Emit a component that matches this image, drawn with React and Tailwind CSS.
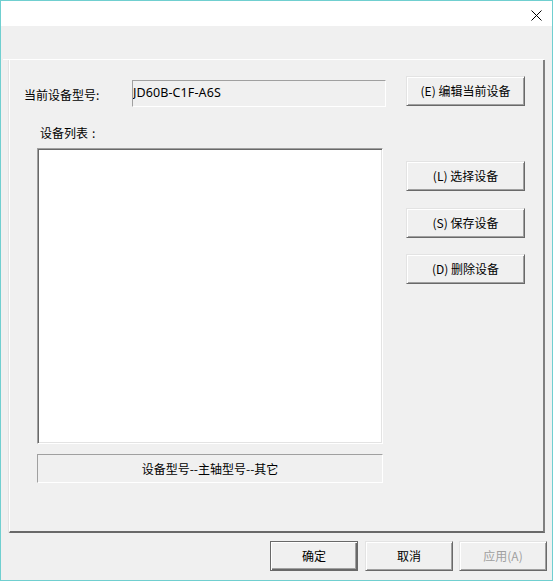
import React from "react";

function WinButton({ children, className = "", disabled = false, isDefault = false }) {
  const look = isDefault
    ? "border border-[#696969] shadow-[inset_1px_1px_0_#ffffff,inset_-1px_-1px_0_#696969,inset_-2px_-2px_0_#a0a0a0]"
    : "border border-t-[#e3e3e3] border-l-[#e3e3e3] border-r-[#696969] border-b-[#696969] shadow-[inset_1px_1px_0_#ffffff,inset_-1px_-1px_0_#a0a0a0]";
  return (
    <button
      className={`flex items-center justify-center bg-[#f0f0f0] text-[12px] leading-none ${look} ${
        disabled ? "text-[#a0a0a0]" : "text-black"
      } ${className}`}
    >
      {children}
    </button>
  );
}

function App() {
  return (
    <div className="w-[553px] h-[581px] border border-[#70cfd0] bg-[#f0f0f0] flex flex-col font-['Noto_Sans_CJK_SC',sans-serif] text-black overflow-hidden">
      {/* title bar */}
      <div className="h-[25px] bg-white flex items-start justify-end pr-[10px] pt-[9px] shrink-0">
        <svg width="11" height="11" viewBox="0 0 11 11">
          <path d="M0.5 0.5 L10.5 10.5 M10.5 0.5 L0.5 10.5" stroke="#000" strokeWidth="1" />
        </svg>
      </div>

      {/* tab page line */}
      <div className="mt-[33px] ml-[2px] w-[541px] h-px bg-white shrink-0" />

      {/* group panel */}
      <div className="ml-[8px] w-[536px] h-[473px] border-l border-l-white border-r-2 border-r-[#808080] border-b-2 border-b-[#696969] shadow-[-1px_0_0_#e3e3e3] flex shrink-0">
        <div className="w-[376px] flex flex-col">
          <div className="mt-[20px] flex items-center h-[27px]">
            <span className="pl-[14px] w-[122px] text-[12px] leading-none pt-[3px]">当前设备型号:</span>
            <div className="w-[254px] h-[27px] border border-t-[#a0a0a0] border-l-[#a0a0a0] border-r-white border-b-white flex items-center overflow-hidden">
              <span className="font-['Noto_Sans',sans-serif] text-[12.5px] leading-none tracking-[0.1px]">JD60B-C1F-A6S</span>
            </div>
          </div>

          <div className="mt-[18px] pl-[30px] text-[12px] leading-[16px]">
            设备列表<span className="ml-[4px]">:</span>
          </div>

          <div className="mt-[7px] ml-[27px] w-[346px] h-[296px] bg-white border border-t-[#a0a0a0] border-l-[#a0a0a0] border-r-white border-b-white shadow-[inset_1px_1px_0_#696969,inset_-1px_-1px_0_#e3e3e3]" />

          <div className="mt-[10px] ml-[27px] w-[346px] h-[29px] border border-t-[#a0a0a0] border-l-[#a0a0a0] border-r-white border-b-white flex items-center justify-center text-[12px] leading-none">
            设备型号--主轴型号--其它
          </div>
        </div>

        <div className="ml-[20px] w-[119px] flex flex-col">
          <WinButton className="mt-[16px] h-[30px]">(E) 编辑当前设备</WinButton>
          <WinButton className="mt-[55px] h-[30px]">(L) 选择设备</WinButton>
          <WinButton className="mt-[17px] h-[30px]">(S) 保存设备</WinButton>
          <WinButton className="mt-[16px] h-[30px]">(D) 删除设备</WinButton>
        </div>
      </div>

      {/* dialog buttons */}
      <div className="mt-[8px] flex justify-end pr-[5px] gap-[7px]">
        <WinButton isDefault className="w-[88px] h-[30px]">确定</WinButton>
        <WinButton className="w-[88px] h-[30px]">取消</WinButton>
        <WinButton disabled className="w-[88px] h-[30px] ml-[-1px]">应用(A)</WinButton>
      </div>
    </div>
  );
}

export default App;
